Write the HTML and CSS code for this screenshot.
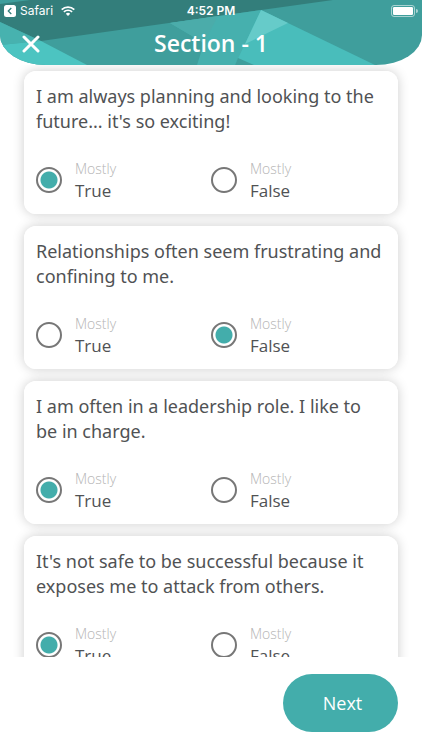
FILE: index.html
```html
<!DOCTYPE html>
<html lang="en">
<head>
  <meta charset="UTF-8" />
  <meta name="viewport" content="width=device-width, initial-scale=1.0"/>
  <title>Section - 1</title>
  <link rel="stylesheet" href="styles.css">
</head>
<body>

  <!-- Header -->
  <header class="header">
    <svg class="header-bg" viewBox="0 0 422 65" preserveAspectRatio="none" aria-hidden="true">
      <rect width="422" height="65" fill="#3f9e9c"/>
      <polygon points="0,0 333,0 41,41 0,22" fill="#337e7b"/>
      <polygon points="0,0 30,0 0,4" fill="#3f9e9c"/>
      <polygon points="0,22 41,41 0,45" fill="#47b2af"/>
      <polygon points="0,45 41,41 87,65 0,65" fill="#4cc4c1"/>
      <polygon points="170,23 261,10 236,65 197,65 204,43" fill="#46b0ae"/>
      <polygon points="170,23 218,16 204,43" fill="#4bacaa"/>
      <polygon points="261,10 375,65 235,65" fill="#49bdbb"/>
      <polygon points="261,10 288,23 245,44" fill="#66cbc9"/>
      <polygon points="238,58 254,65 235,65" fill="#3f9e9c"/>
    </svg>
    <div class="status-bar">
      <div class="status-left">
        <svg width="12" height="12" viewBox="0 0 12 12" aria-hidden="true">
          <rect width="12" height="12" rx="2.5" fill="#fff"/>
          <path d="M7.3 3 4.3 6l3 3" fill="none" stroke="#337e7b" stroke-width="1.3"/>
        </svg>
        <span>Safari</span>
        <svg class="wifi" width="14" height="10" viewBox="0 0 14 10" aria-hidden="true">
          <path d="M.7 3.6a9 9 0 0 1 12.6 0M2.9 5.9a5.9 5.9 0 0 1 8.2 0" fill="none" stroke="#fff" stroke-width="1.7"/>
          <path d="M7 10 4.8 7.7a3.2 3.2 0 0 1 4.4 0z" fill="#fff"/>
        </svg>
      </div>
      <span class="time">4:52 PM</span>
      <svg class="battery" width="27" height="12" viewBox="0 0 27 12" aria-hidden="true">
        <rect x=".5" y=".5" width="23" height="11" rx="2.5" fill="none" stroke="#fff" stroke-opacity=".55"/>
        <rect x="2" y="2" width="20" height="8" rx="1.2" fill="#fff"/>
        <path d="M25 4a2 2 0 0 1 0 4z" fill="#fff" fill-opacity=".55"/>
      </svg>
    </div>
    <div class="title-bar">
      <button type="button" class="close" aria-label="Close">
        <svg width="18" height="18" viewBox="0 0 18 18" aria-hidden="true">
          <path d="M2 2l14 14M16 2 2 16" stroke="#fff" stroke-width="3" stroke-linecap="round"/>
        </svg>
      </button>
      <h1>Section - 1</h1>
    </div>
  </header>

  <!-- Questions -->
  <main class="questions">
    <fieldset class="card">
      <legend>I am always planning and looking to the future... it's so exciting!</legend>
      <div class="options">
        <label class="option"><input type="radio" name="q1" checked><span><small>Mostly</small>True</span></label>
        <label class="option"><input type="radio" name="q1"><span><small>Mostly</small>False</span></label>
      </div>
    </fieldset>
    <fieldset class="card">
      <legend>Relationships often seem frustrating and confining to me.</legend>
      <div class="options">
        <label class="option"><input type="radio" name="q2"><span><small>Mostly</small>True</span></label>
        <label class="option"><input type="radio" name="q2" checked><span><small>Mostly</small>False</span></label>
      </div>
    </fieldset>
    <fieldset class="card">
      <legend>I am often in a leadership role. I like to be in charge.</legend>
      <div class="options">
        <label class="option"><input type="radio" name="q3" checked><span><small>Mostly</small>True</span></label>
        <label class="option"><input type="radio" name="q3"><span><small>Mostly</small>False</span></label>
      </div>
    </fieldset>
    <fieldset class="card">
      <legend>It's not safe to be successful because it exposes me to attack from others.</legend>
      <div class="options">
        <label class="option"><input type="radio" name="q4" checked><span><small>Mostly</small>True</span></label>
        <label class="option"><input type="radio" name="q4"><span><small>Mostly</small>False</span></label>
      </div>
    </fieldset>
  </main>

  <footer class="footer">
    <button type="button" class="btn">Next</button>
  </footer>

</body>
</html>
```
FILE: styles.css
```css
* {
  box-sizing: border-box;
}

body {
  margin: 0;
  height: 100vh;
  display: flex;
  flex-direction: column;
  font-family: 'Noto Sans', 'Open Sans', sans-serif;
  font-size: 18px;
  line-height: 25px;
  color: #505254;
  background: #fff;
}

/* Header */
.header {
  position: relative;
  flex: none;
  overflow: hidden;
  border-radius: 0 0 46px 46px / 0 0 30px 30px;
  color: #fff;
}

.header-bg {
  position: absolute;
  top: 0;
  left: 0;
  width: 100%;
  height: 100%;
}

.status-bar {
  position: relative;
  display: grid;
  grid-template-columns: 1fr auto 1fr;
  align-items: center;
  height: 22px;
  padding: 0 4px;
  font-family: Inter, sans-serif;
  font-size: 12px;
  line-height: 22px;
}

.status-left {
  display: flex;
  align-items: center;
  gap: 4px;
}

.wifi {
  margin-left: 4px;
}

.time {
  font-weight: 600;
}

.battery {
  justify-self: end;
}

.title-bar {
  position: relative;
  display: grid;
  grid-template-columns: 18px 1fr 18px;
  align-items: center;
  height: 43px;
  padding: 0 22px;
}

.close {
  display: flex;
  padding: 0;
  border: none;
  background: none;
  cursor: pointer;
}

h1 {
  margin: 0;
  font-family: 'Open Sans', sans-serif;
  font-size: 23px;
  font-weight: 600;
  text-align: center;
}

/* Questions */
.questions {
  flex: 1;
  min-height: 0;
  overflow-y: auto;
  scrollbar-width: none;
  display: flex;
  flex-direction: column;
  gap: 12px;
  padding: 6px 24px;
}

.card {
  flex: none;
  min-width: 0;
  margin: 0;
  padding: 13px 12px 12px;
  border: none;
  border-radius: 12px;
  background: #fff;
  box-shadow: 0 0 12px rgba(0, 0, 0, 0.2);
}

legend {
  float: left;
  width: 100%;
  padding: 0;
  margin-bottom: 24px;
}

.options {
  clear: both;
  display: grid;
  grid-template-columns: 1fr 1fr;
}

.option {
  display: flex;
  align-items: center;
  gap: 13px;
  font-family: 'Open Sans', sans-serif;
  font-size: 17px;
  line-height: 22px;
  cursor: pointer;
}

.option small {
  display: block;
  font-size: 14px;
  font-weight: 300;
  color: #b4b4b4;
}

.option input {
  appearance: none;
  width: 26px;
  height: 26px;
  margin: 0;
  border: 2px solid #777;
  border-radius: 50%;
}

.option input:checked {
  background: radial-gradient(circle, #43adab 8px, transparent 9px);
}

/* Footer */
.footer {
  flex: none;
  display: flex;
  justify-content: flex-end;
  padding: 17px 24px 18px;
}

.btn {
  width: 115px;
  height: 58px;
  padding: 0 0 0 4px;
  border: none;
  border-radius: 29px;
  background: #43adab;
  color: #fff;
  font-family: 'Open Sans', sans-serif;
  font-size: 18px;
  cursor: pointer;
}
```
